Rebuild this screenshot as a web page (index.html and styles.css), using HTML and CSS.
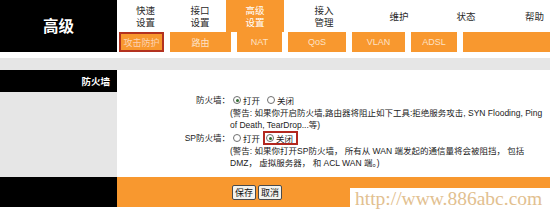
FILE: index.html
```html
<!DOCTYPE html>
<html lang="zh-CN">
<head>
<meta charset="utf-8">
<title>高级 - 防火墙</title>
<link rel="stylesheet" href="styles.css">
</head>
<body>
<div class="page">
  <header class="top">
    <div class="brand">高级</div>
    <nav class="nav">
      <div class="nav-main">
        <div class="tab w57"><span class="ln">快速</span><span class="ln">设置</span></div>
        <div class="tab w52"><span class="ln">接口</span><span class="ln">设置</span></div>
        <div class="tab w58 active"><span class="ln">高级</span><span class="ln">设置</span></div>
        <div class="tab w80"><span class="ln">接入</span><span class="ln">管理</span></div>
        <div class="tab w70"><span class="ln">维护</span></div>
        <div class="tab w64"><span class="ln">状态</span></div>
        <div class="tab tab-last"><span class="ln">帮助</span></div>
      </div>
      <div class="nav-sub">
        <div class="sub s49 current">攻击防护</div>
        <div class="sub s61">路由</div>
        <div class="sub s45">NAT</div>
        <div class="sub s58">QoS</div>
        <div class="sub s53">VLAN</div>
        <div class="sub s46">ADSL</div>
        <div class="sub s-rest"></div>
      </div>
    </nav>
  </header>

  <div class="strip"></div>

  <main class="main">
    <aside class="side">
      <div class="side-title">防火墙</div>
    </aside>
    <section class="content">
      <div class="row">
        <div class="label">防火墙：</div>
        <div class="value">
          <div class="opts">
            <span class="opt"><span class="radio on"></span>打开</span>
            <span class="opt"><span class="radio"></span>关闭</span>
          </div>
          <div class="warn">(警告: 如果你开启防火墙,路由器将阻止如下工具:拒绝服务攻击, SYN Flooding, Ping<br>of Death, TearDrop...等)</div>
        </div>
      </div>
      <div class="row">
        <div class="label">SP防火墙：</div>
        <div class="value">
          <div class="opts">
            <span class="opt"><span class="radio"></span>打开</span>
            <span class="opt hl"><span class="radio on"></span>关闭</span>
          </div>
          <div class="warn">(警告: 如果你打开SP防火墙， 所有从 WAN 端发起的通信量将会被阻挡， 包括<br>DMZ， 虚拟服务器， 和 ACL WAN 端。)</div>
        </div>
      </div>
    </section>
  </main>

  <footer class="bar">
    <div class="bar-left"></div>
    <div class="bar-right">
      <button class="btn" type="button">保存</button>
      <button class="btn" type="button">取消</button>
    </div>
  </footer>

  <div class="watermark">http://www.886abc.com</div>
</div>
</body>
</html>
```

FILE: styles.css
```css
* { box-sizing: border-box; }

html, body {
  margin: 0;
  padding: 0;
  background: #ffffff;
}

body {
  font-family: "Liberation Sans", "Noto Sans CJK SC", sans-serif;
  color: #222;
}

.page {
  position: relative;
  width: 553px;
  height: 209px;
  overflow: hidden;
  background: #fff;
}

/* ---------- header ---------- */
.top {
  display: flex;
  width: 550px;
  height: 52px;
}

.brand {
  width: 117px;
  background: #000;
  color: #fff;
  font-family: "Noto Sans CJK SC", sans-serif;
  font-weight: bold;
  font-size: 15.5px;
  display: flex;
  align-items: center;
  justify-content: center;
  padding-bottom: 2px;
}

.nav {
  flex: 1;
  display: flex;
  flex-direction: column;
}

.nav-main {
  display: flex;
  height: 32px;
}

.tab {
  display: flex;
  flex-direction: column;
  align-items: center;
  justify-content: center;
  text-align: center;
  font-family: "Noto Sans CJK SC", sans-serif;
  font-size: 9.5px;
  color: #2a2a2a;
}

.ln {
  display: block;
  line-height: 12.5px;
  height: 12.5px;
}

.w57 { width: 57px; }
.w52 { width: 52px; }
.w58 { width: 58px; }
.w80 { width: 80px; }
.w70 { width: 70px; }
.w64 { width: 64px; }
.tab-last { flex: 1; align-items: flex-end; padding-right: 6px; }

.tab.active {
  background: #f8982f;
  color: #fff;
}

.nav-sub {
  display: flex;
  gap: 6px;
  height: 20px;
  padding-left: 2px;
}

.sub {
  background: #f8982f;
  color: #fde2c6;
  font-size: 9px;
  display: flex;
  align-items: center;
  justify-content: center;
  font-family: "Liberation Sans", "Noto Sans CJK SC", sans-serif;
}

.sub.current {
  border: 2px solid #b3321f;
  color: #fcd3b4;
}

.s49 { width: 45px; }
.s61 { width: 61px; }
.s45 { width: 45px; }
.s58 { width: 58px; }
.s53 { width: 53px; }
.s46 { width: 46px; }
.s-rest { flex: 1; }

/* ---------- grey strip ---------- */
.strip {
  width: 550px;
  height: 12px;
  margin-top: 6px;
  background: #e6e6e6;
}

/* ---------- main ---------- */
.main {
  display: flex;
  width: 550px;
  height: 107px;
}

.side {
  width: 117px;
  background: #e6e6e6;
}

.side-title {
  height: 22px;
  background: #000;
  color: #fff;
  font-family: "Noto Sans CJK SC", sans-serif;
  font-weight: bold;
  font-size: 9.5px;
  display: flex;
  align-items: center;
  justify-content: flex-end;
  padding-right: 7px;
}

.content {
  flex: 1;
  padding-top: 23px;
  font-size: 8.5px;
  color: #222;
}

.row {
  display: flex;
}

.label {
  width: 113px;
  text-align: right;
  height: 14px;
  line-height: 14px;
  white-space: nowrap;
}

.value {
  flex: 1;
}

.opts {
  display: flex;
  align-items: center;
  height: 14px;
  gap: 3px;
}

.opt {
  display: inline-flex;
  align-items: center;
  gap: 2px;
  height: 14px;
  padding: 0 1px 0 3px;
}

.opt.hl {
  border: 2px solid #b3281f;
  padding: 0 3px 0 1px;
  margin-left: -1px;
}

.radio {
  display: inline-block;
  width: 8px;
  height: 8px;
  border: 1px solid #6f6f6f;
  border-radius: 50%;
  background: #fff;
  position: relative;
}

.radio.on::after {
  content: "";
  position: absolute;
  left: 1.5px;
  top: 1.5px;
  width: 3px;
  height: 3px;
  border-radius: 50%;
  background: #2f6b2f;
}

.warn {
  line-height: 12px;
  white-space: nowrap;
}

/* ---------- footer bar ---------- */
.bar {
  display: flex;
  width: 550px;
  height: 30px;
}

.bar-left {
  width: 117px;
  background: #000;
}

.bar-right {
  flex: 1;
  background: #f8982f;
  display: flex;
  align-items: center;
  gap: 2px;
  padding-left: 115px;
}

.btn {
  font-family: "Noto Sans CJK SC", sans-serif;
  font-size: 9px;
  line-height: 11px;
  height: 15px;
  padding: 0 2px;
  border: 1px solid #4a4a4a;
  border-radius: 2px;
  background: #f3f3ef;
  color: #111;
  margin: 0;
}

/* ---------- watermark overlay ---------- */
.watermark {
  position: absolute;
  left: 350px;
  top: 188px;
  right: 0;
  bottom: 0;
  background: #fff;
  padding-left: 5px;
  font-family: "Liberation Serif", serif;
  font-size: 19.5px;
  line-height: 21px;
  color: #e2c08f;
  white-space: nowrap;
}
```
